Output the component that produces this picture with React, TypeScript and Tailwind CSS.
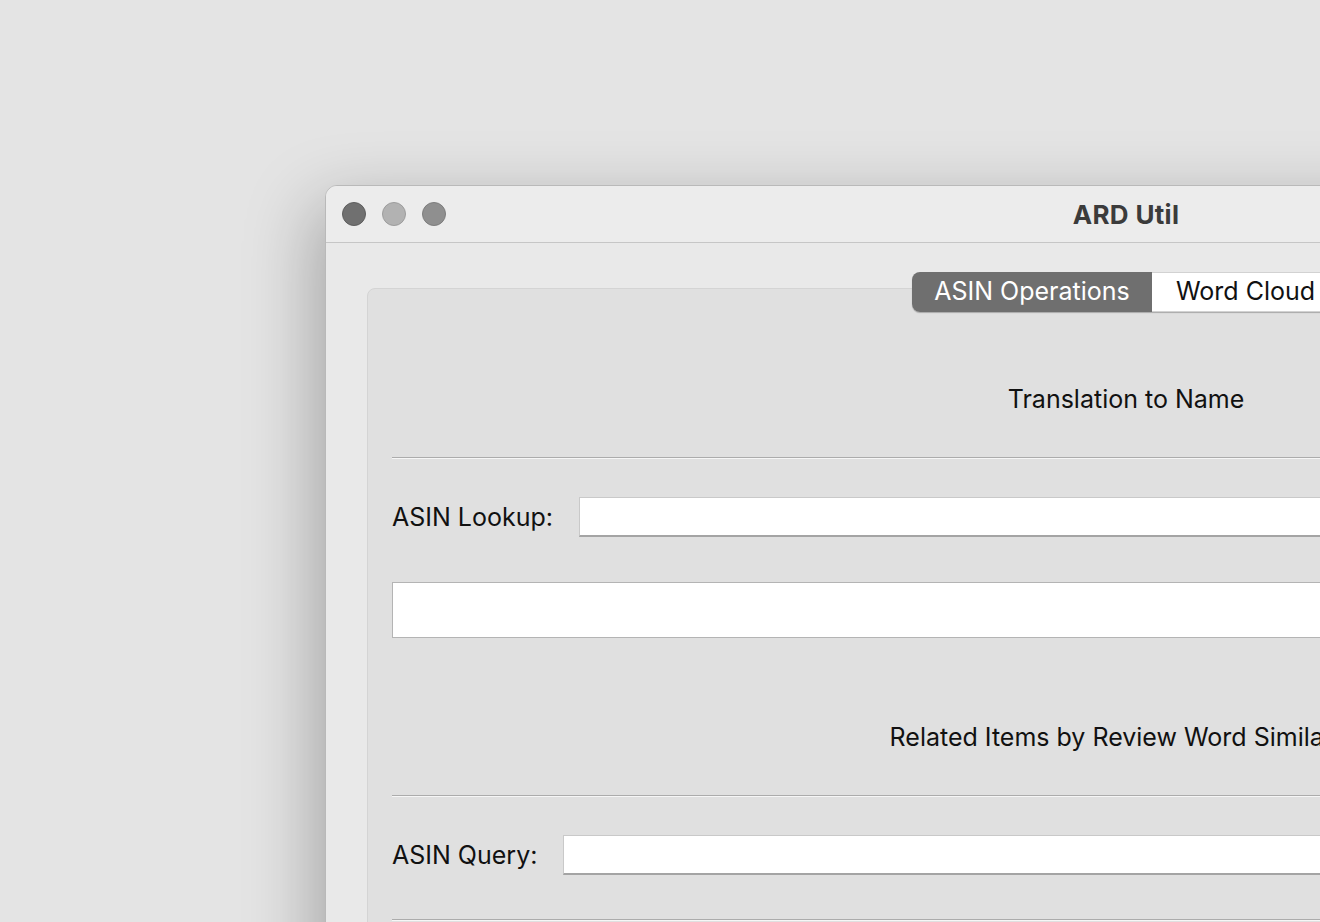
import React from "react";

const font = { fontFamily: "Inter, 'Noto Sans', 'Liberation Sans', sans-serif" };

function Separator() {
  return (
    <div className="flex flex-col">
      <div className="h-px bg-[#acacac]" />
      <div className="h-px bg-[#f6f6f6]" />
    </div>
  );
}

function Field({ label }: { label: string }) {
  return (
    <div className="flex items-center gap-[26px]">
      <span className="text-[25px] leading-[30px] text-[#111] whitespace-nowrap">{label}</span>
      <div className="h-[40px] flex-1 bg-white border border-[#c9c9c9] border-b-2 border-b-[#a4a4a4]" />
    </div>
  );
}

export default function App() {
  return (
    <div
      className="w-[1320px] h-[922px] overflow-hidden bg-[#e4e4e4] pl-[325px] pt-[185px]"
      style={font}
    >
      <div className="w-[1602px] h-[900px] rounded-t-[12px] border border-[#b9b9b9] bg-[#e9e9e9] shadow-[-10px_20px_70px_rgba(0,0,0,0.28)] overflow-hidden flex flex-col">
        {/* title bar */}
        <div className="relative h-[57px] shrink-0 bg-[#ececec] border-b border-[#c6c6c6] flex items-center">
          <div className="flex items-center gap-[16px] pl-[16px]">
            <div className="w-[24px] h-[24px] rounded-full bg-[#707070] border border-[#5e5e5e]" />
            <div className="w-[24px] h-[24px] rounded-full bg-[#b2b2b2] border border-[#9d9d9d]" />
            <div className="w-[24px] h-[24px] rounded-full bg-[#8f8f8f] border border-[#7d7d7d]" />
          </div>
          <div className="absolute inset-0 flex items-center justify-center pointer-events-none">
            <span className="text-[26px] font-bold text-[#3b3b3b] tracking-[0.3px]">ARD Util</span>
          </div>
        </div>

        {/* body */}
        <div className="flex-1 px-[41px] pt-[29px] relative">
          <div className="relative pt-[16px]">
            {/* group box */}
            <div className="rounded-[8px] border border-[#d4d4d4] bg-[#e0e0e0] px-[24px] pb-[40px]">
              <div className="pt-[95px] text-center text-[25px] leading-[30px] text-[#111]">Translation to Name</div>
              <div className="mt-[43px]">
                <Separator />
              </div>
              <div className="mt-[38px]">
                <Field label="ASIN Lookup:" />
              </div>
              <div className="mt-[45px] h-[56px] bg-white border border-[#b4b4b4]" />
              <div className="mt-[84px] text-center text-[25px] leading-[30px] text-[#111] whitespace-nowrap">
                Related Items by Review Word Similarity
              </div>
              <div className="mt-[43px]">
                <Separator />
              </div>
              <div className="mt-[38px]">
                <Field label="ASIN Query:" />
              </div>
              <div className="mt-[44px]">
                <Separator />
              </div>
            </div>
            {/* tabs overlay on the box top */}
            <div className="absolute top-0 left-0 right-0 flex justify-center">
              <div className="flex h-[40px] rounded-[8px] shadow-[0_1px_1px_rgba(0,0,0,0.25)]">
                <div className="flex items-center w-[240px] justify-center bg-[#6f6f6f] rounded-l-[8px] text-white text-[25px]">
                  ASIN Operations
                </div>
                <div className="flex items-center w-[188px] justify-center bg-white rounded-r-[8px] text-[#111] text-[25px] border-y border-r border-[#d2d2d2]">
                  Word Cloud
                </div>
              </div>
            </div>
          </div>
        </div>
      </div>
    </div>
  );
}
